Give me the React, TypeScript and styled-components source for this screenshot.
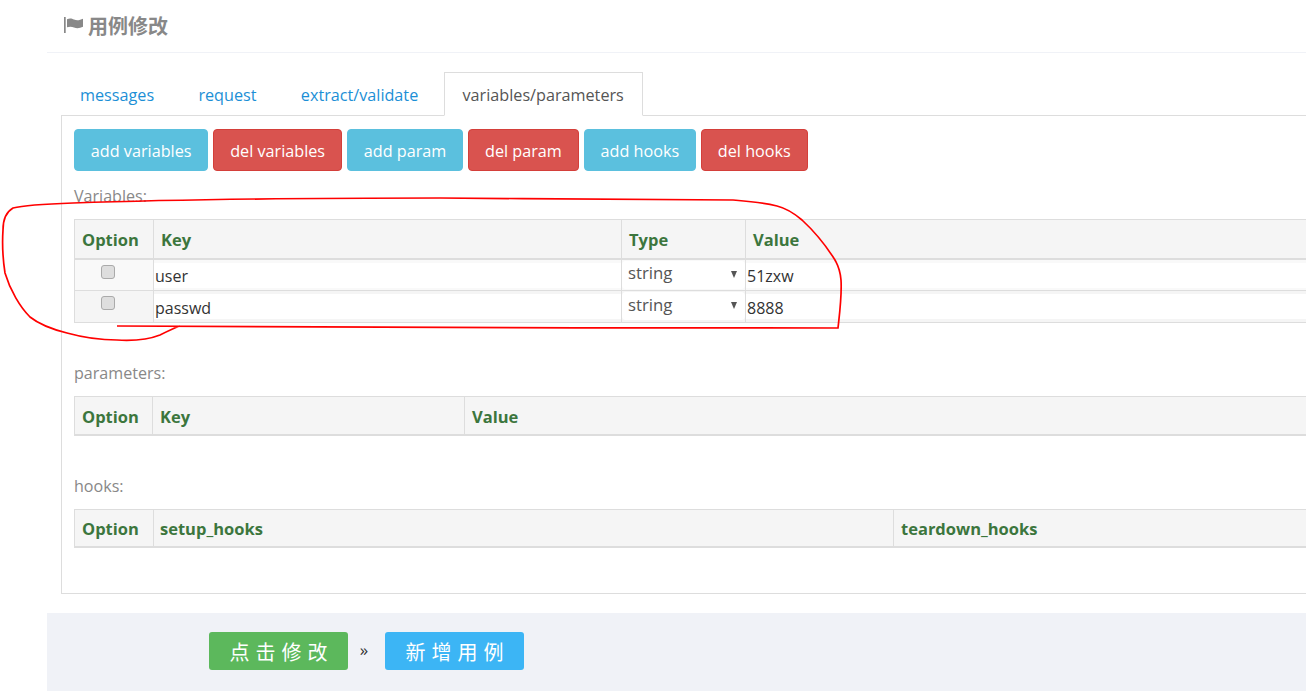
import React from 'react';
import styled, { createGlobalStyle } from 'styled-components';

const GlobalStyle = createGlobalStyle`
  html, body {
    margin: 0;
    height: 691px;
    overflow: hidden;
    background: #fff;
  }
  body {
    font-family: "Open Sans", "Noto Sans CJK SC", sans-serif;
    font-size: 16px;
    color: #333;
  }
  * {
    box-sizing: border-box;
  }
`;

const Page = styled.div`
  position: relative;
  width: 1306px;
  height: 691px;
  padding-left: 47px;
  overflow: hidden;
`;

const Header = styled.div`
  display: flex;
  align-items: center;
  gap: 5px;
  height: 53px;
  padding: 0 0 1px 17px;
  border-bottom: 1px solid #f0f2f7;
  color: #888;
`;

const Title = styled.h2`
  margin: 0;
  font-family: "Noto Sans CJK SC", sans-serif;
  font-size: 20px;
  font-weight: 700;
`;

const Tabs = styled.ul`
  display: flex;
  list-style: none;
  margin: 19px 0 -1px 14px;
  padding: 0;
  position: relative;
`;

const Tab = styled.li<{ $active?: boolean }>`
  height: 44px;
  padding: 0 18px;
  margin-right: 6.3px;
  line-height: 44px;
  font-size: 16.2px;
  color: ${({ $active }) => ($active ? '#555' : '#1c8fd6')};
  background: ${({ $active }) => ($active ? '#fff' : 'transparent')};
  border: 1px solid ${({ $active }) => ($active ? '#ddd' : 'transparent')};
  border-bottom-color: ${({ $active }) => ($active ? '#fff' : 'transparent')};
`;

const Panel = styled.div`
  width: 1300px;
  height: 479px;
  margin-left: 14px;
  padding: 13px 12px;
  border: 1px solid #ddd;
`;

const Actions = styled.div`
  display: flex;
  gap: 5px;
`;

const ActionButton = styled.button<{ $danger?: boolean }>`
  height: 42px;
  padding: 2px 15.87px 0;
  font-family: inherit;
  font-size: 16.2px;
  color: #fff;
  border-radius: 4px;
  border: 1px solid ${({ $danger }) => ($danger ? '#d43f3a' : '#5bc0de')};
  background: ${({ $danger }) => ($danger ? '#d9534f' : '#5bc0de')};
`;

const SectionLabel = styled.div<{ $top: number }>`
  margin-top: ${({ $top }) => $top}px;
  height: 37px;
  padding-top: 2px;
  line-height: 24px;
  font-size: 16.1px;
  color: #888;
`;

const Grid = styled.table`
  width: 100%;
  table-layout: fixed;
  border-collapse: collapse;
`;

const HeadCell = styled.th<{ $width?: number; $tight?: boolean }>`
  width: ${({ $width }) => ($width ? `${$width}px` : 'auto')};
  height: 38px;
  padding: 2px 7px 0 ${({ $tight }) => ($tight ? 6 : 7)}px;
  text-align: left;
  font-size: 16.5px;
  font-weight: 700;
  color: #3c763d;
  background: #f5f5f5;
  border: 1px solid #ddd;
  border-bottom-width: 2px;
`;

const VariablesGrid = styled(Grid)`
  ${HeadCell} {
    height: 39px;
  }
`;

const Row = styled.tr<{ $even?: boolean }>`
  background: ${({ $even }) => ($even ? '#f5f5f5' : '#f9f9f9')};
`;

const Cell = styled.td`
  height: 32px;
  padding: 0;
  vertical-align: top;
  border: 1px solid #ddd;
`;

const CheckCell = styled(Cell)`
  padding: 5px 12px 0 0;
`;

const Check = styled.input`
  appearance: none;
  display: block;
  width: 14px;
  height: 14px;
  margin: 0 auto;
  border: 1px solid #aaa;
  border-radius: 3px;
  background: #dedede;
`;

const TextInput = styled.input`
  display: block;
  width: 100%;
  height: 25px;
  margin-top: 3px;
  padding: 2px 1px 0;
  border: 0;
  outline: 0;
  font-family: inherit;
  font-size: 16px;
  color: #333;
  background: #fff;
`;

const SelectWrap = styled.div`
  position: relative;
  height: 28px;
  margin-top: 1px;
  &::after {
    content: '';
    position: absolute;
    right: 8px;
    top: 10px;
    border-left: 3.5px solid transparent;
    border-right: 3.5px solid transparent;
    border-top: 7px solid #555;
  }
`;

const Select = styled.select`
  appearance: none;
  display: block;
  width: 100%;
  height: 28px;
  padding: 0 6px 4px;
  border: 0;
  border-radius: 4px;
  outline: 0;
  font-family: inherit;
  font-size: 16.8px;
  color: #555;
  background: #fff;
`;

const Footer = styled.div`
  display: flex;
  align-items: center;
  height: 78px;
  margin-top: 19px;
  padding: 0 0 2px 162px;
  background: #f0f2f7;
`;

const SubmitButton = styled.button<{ $color: string }>`
  width: 139px;
  height: 38px;
  padding: 0 0 0 6px;
  border: 0;
  border-radius: 3px;
  font-family: "Noto Sans CJK SC", sans-serif;
  font-size: 20px;
  letter-spacing: 6px;
  color: #fff;
  background: ${({ $color }) => $color};
`;

const Separator = styled.span`
  width: 37px;
  padding: 0 5px 4px 0;
  text-align: center;
  font-size: 17px;
  color: #333;
`;

const Annotation = styled.svg`
  position: absolute;
  left: 0;
  top: 0;
  pointer-events: none;
`;

const FlagIcon = () => (
  <svg width="19" height="17" viewBox="0 0 19 17" fill="#888">
    <rect x="0" y="0" width="1.7" height="16" />
    <path d="M3 2.2 C6 0.8 8 1.6 10 2.6 C13 3.9 16 3.2 19 1.8 L19 9.8 C16 11.2 13 11.6 10 10.5 C8 9.7 6 9.2 3 10.3 Z" />
  </svg>
);

const variables = [
  { key: 'user', value: '51zxw' },
  { key: 'passwd', value: '8888' },
];

export default function App() {
  return (
    <Page>
      <GlobalStyle />
      <Header>
        <FlagIcon />
        <Title>用例修改</Title>
      </Header>
      <Tabs>
        <Tab>messages</Tab>
        <Tab>request</Tab>
        <Tab>extract/validate</Tab>
        <Tab $active>variables/parameters</Tab>
      </Tabs>
      <Panel>
        <Actions>
          <ActionButton>add variables</ActionButton>
          <ActionButton $danger>del variables</ActionButton>
          <ActionButton>add param</ActionButton>
          <ActionButton $danger>del param</ActionButton>
          <ActionButton>add hooks</ActionButton>
          <ActionButton $danger>del hooks</ActionButton>
        </Actions>

        <SectionLabel $top={11}>Variables:</SectionLabel>
        <VariablesGrid>
          <thead>
            <tr>
              <HeadCell $width={79}>Option</HeadCell>
              <HeadCell $width={468}>Key</HeadCell>
              <HeadCell $width={124}>Type</HeadCell>
              <HeadCell>Value</HeadCell>
            </tr>
          </thead>
          <tbody>
            {variables.map((item, i) => (
              <Row key={item.key} $even={i % 2 === 1}>
                <CheckCell>
                  <Check type="checkbox" />
                </CheckCell>
                <Cell>
                  <TextInput defaultValue={item.key} />
                </Cell>
                <Cell>
                  <SelectWrap>
                    <Select defaultValue="string">
                      <option>string</option>
                    </Select>
                  </SelectWrap>
                </Cell>
                <Cell>
                  <TextInput defaultValue={item.value} />
                </Cell>
              </Row>
            ))}
          </tbody>
        </VariablesGrid>

        <SectionLabel $top={36}>parameters:</SectionLabel>
        <Grid>
          <thead>
            <tr>
              <HeadCell $width={78}>Option</HeadCell>
              <HeadCell $width={312}>Key</HeadCell>
              <HeadCell>Value</HeadCell>
            </tr>
          </thead>
        </Grid>

        <SectionLabel $top={36}>hooks:</SectionLabel>
        <Grid>
          <thead>
            <tr>
              <HeadCell $width={79}>Option</HeadCell>
              <HeadCell $width={740} $tight>setup_hooks</HeadCell>
              <HeadCell>teardown_hooks</HeadCell>
            </tr>
          </thead>
        </Grid>
      </Panel>
      <Footer>
        <SubmitButton $color="#5cb85c">点击修改</SubmitButton>
        <Separator>»</Separator>
        <SubmitButton $color="#3cb5f5">新增用例</SubmitButton>
      </Footer>
      <Annotation width="1306" height="691" viewBox="0 0 1306 691" fill="none">
        <path
          d="M117 326 C300 326 600 329 838 328 C840 310 842 295 841 280 C840 268 837 264 835 260 C825 244 815 232 802 220 C795 214 785 208 777 206 C760 202 745 201 733 200 C650 199 540 199 440 198 C320 198 190 199 73 203 C45 204 25 205 13 208 C6 212 3 220 3 230 C2 245 3 260 5 273 C10 290 20 307 30 317 C40 325 55 330 67 333 C85 338 100 340 117 340 C135 341 150 339 160 335 C168 331 174 328 180 326"
          stroke="#f00"
          strokeWidth="1.7"
        />
      </Annotation>
    </Page>
  );
}
